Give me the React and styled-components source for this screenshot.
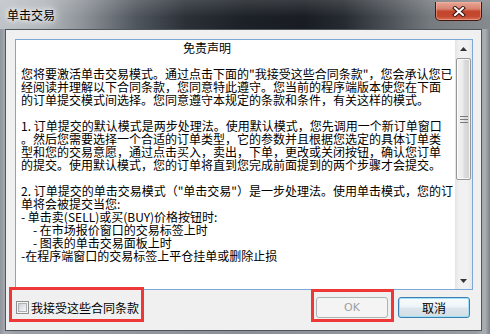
import React from 'react';
import styled, { createGlobalStyle } from 'styled-components';

const Global = createGlobalStyle`
  html, body { margin: 0; padding: 0; background: #fff; }
  body {
    width: 490px; height: 334px; overflow: hidden;
    font-family: "Noto Sans CJK SC", "Noto Sans", sans-serif;
  }
`;

const Window = styled.div`
  width: 490px;
  height: 334px;
  box-sizing: border-box;
  display: flex;
  flex-direction: column;
  background: linear-gradient(90deg, #8f959b 0%, #a3a9ae 1%, #9aa0a6 3%, #8a9096 50%, #979ca1 97%, #a9aeb3 99%, #7d8288 100%);
`;

const TitleBar = styled.div`
  height: 29px;
  flex: none;
  display: flex;
  align-items: flex-start;
  justify-content: space-between;
  background:
    linear-gradient(180deg, rgba(255,255,255,0.14) 0%, rgba(255,255,255,0) 60%),
    linear-gradient(90deg, #bfc4c9 0%, #b1b6bb 9%, #8d9298 17%, #4f555c 28%, #2b3037 38%, #1c2127 50%, #191d23 62%, #252a30 70%, #4f545a 80%, #767b80 88%, #858a8f 100%);
`;

const Caption = styled.div`
  padding: 8px 0 0 7px;
  font-size: 12px;
  line-height: 14px;
  color: #000;
  text-shadow: 0 0 4px #fff, 0 0 8px rgba(255,255,255,0.9), 0 0 12px rgba(255,255,255,0.7);
`;

const CloseButton = styled.div`
  margin: 2px 8px 0 0;
  width: 47px;
  height: 19px;
  box-sizing: border-box;
  border: 1px solid #43160f;
  border-top: none;
  border-radius: 0 0 5px 5px;
  background: linear-gradient(180deg, #e7a696 0%, #d98470 38%, #c2452c 52%, #c3492f 80%, #d8725a 100%);
  box-shadow: inset 0 0 0 1px rgba(255, 190, 170, 0.45);
  display: flex;
  align-items: center;
  justify-content: center;
`;

const Client = styled.div`
  flex: 1;
  margin: 0 8px 3px 5px;
  border: 1px solid #4f565d;
  background: #f0f0f0;
  display: flex;
  flex-direction: column;
`;

const TextBox = styled.div`
  margin: 9px 8px 0 9px;
  height: 251px;
  flex: none;
  box-sizing: border-box;
  border: 1px solid #7ba8d6;
  background: #fff;
  display: flex;
`;

const Content = styled.div`
  flex: 1;
  padding: 1px 0 0 5px;
  overflow: hidden;
  font-size: 12px;
  line-height: 13px;
  color: #000;
`;

const Line = styled.div`
  height: 13px;
  white-space: pre;
  padding-left: ${p => p.$indent || 0}px;
`;

const Title = styled(Line)`
  padding-left: 162px;
`;

const Scrollbar = styled.div`
  width: 17px;
  flex: none;
  display: flex;
  flex-direction: column;
  background: linear-gradient(90deg, #e4e4e4 0%, #f1f1f1 25%, #f1f1f1 75%, #e7e7e7 100%);
`;

const ArrowButton = styled.div`
  height: 17px;
  flex: none;
  display: flex;
  align-items: center;
  justify-content: center;
`;

const Thumb = styled.div`
  margin: 1px 1px 0 1px;
  height: 122px;
  flex: none;
  box-sizing: border-box;
  border: 1px solid #979797;
  border-radius: 2px;
  background: linear-gradient(90deg, #f4f4f4 0%, #ebebeb 45%, #dcdcdc 55%, #d2d2d2 100%);
  box-shadow: inset 0 0 0 1px rgba(255,255,255,0.75);
  display: flex;
  align-items: center;
  justify-content: center;
`;

const TrackSpace = styled.div`
  flex: 1;
`;

const Footer = styled.div`
  height: 40px;
  flex: none;
  display: flex;
  align-items: flex-start;
  padding: 0 11px 0 6px;
`;

const CheckRow = styled.label`
  width: 129px;
  height: 29px;
  box-sizing: border-box;
  padding: 11px 0 0 4px;
  display: flex;
  align-items: flex-start;
  gap: 2px;
  outline: 3px solid #ee3737;
  font-size: 12px;
  line-height: 13px;
  color: #000;
`;

const CheckBox = styled.span`
  width: 13px;
  height: 13px;
  flex: none;
  box-sizing: border-box;
  border: 1px solid #8e8f8f;
  background: #f4f4f4;
  display: flex;
  align-items: center;
  justify-content: center;
  &::before {
    content: "";
    width: 9px;
    height: 9px;
    box-sizing: border-box;
    border: 1px solid #aeb1b5;
    background: linear-gradient(135deg, #cbcfd5 0%, #e3e5e8 50%, #f7f7f7 100%);
  }
`;

const OKSlot = styled.div`
  margin: 2px 0 0 auto;
  width: 77px;
  height: 27px;
  box-sizing: border-box;
  padding: 5px 0 0 2px;
  outline: 3px solid #ee3737;
`;

const Button = styled.div`
  width: 72px;
  height: 21px;
  box-sizing: border-box;
  border-radius: 3px;
  display: flex;
  align-items: center;
  justify-content: center;
  font-size: 12px;
`;

const OKButton = styled(Button)`
  border: 1px solid #adb2b5;
  background: #f4f4f4;
  color: #a0a0a0;
  font-family: "DejaVu Sans", sans-serif;
  font-size: 11px;
`;

const CancelButton = styled(Button)`
  margin: 7px 0 0 7px;
  border: 1px solid #3c7fb1;
  background: linear-gradient(180deg, #f7fbfd 0%, #eef4f8 48%, #dde6ec 52%, #d2dde4 100%);
  box-shadow: inset 0 0 0 1px #9fe0f9;
  color: #000;
`;

const lines = [
  { t: '' },
  { t: '您将要激活单击交易模式。通过点击下面的"我接受这些合同条款"，您会承认您已' },
  { t: '经阅读并理解以下合同条款，您同意特此遵守。您当前的程序端版本使您在下面' },
  { t: '的订单提交模式间选择。您同意遵守本规定的条款和条件，有关这样的模式。' },
  { t: '' },
  { t: '1. 订单提交的默认模式是两步处理法。使用默认模式，您先调用一个新订单窗口' },
  { t: '。然后您需要选择一个合适的订单类型，它的参数并且根据您选定的具体订单类' },
  { t: '型和您的交易意愿，通过点击买入，卖出，下单，更改或关闭按钮，确认您订单' },
  { t: '的提交。使用默认模式，您的订单将直到您完成前面提到的两个步骤才会提交。' },
  { t: '' },
  { t: '2. 订单提交的单击交易模式（"单击交易"）是一步处理法。使用单击模式，您的订' },
  { t: '单将会被提交当您:' },
  { t: '- 单击卖(SELL)或买(BUY)价格按钮时:' },
  { t: '- 在市场报价窗口的交易标签上时', indent: 12 },
  { t: '- 图表的单击交易面板上时', indent: 12 },
  { t: '-在程序端窗口的交易标签上平仓挂单或删除止损' },
];

const CloseGlyph = () => (
  <svg width="14" height="11" viewBox="0 0 14 11">
    <path d="M3 2 L11 9 M11 2 L3 9" stroke="#3a1410" strokeWidth="4" strokeLinecap="square" fill="none" />
    <path d="M3 2 L11 9 M11 2 L3 9" stroke="#ffffff" strokeWidth="2" strokeLinecap="square" fill="none" />
  </svg>
);

const UpArrow = () => (
  <svg width="7" height="4" viewBox="0 0 7 4">
    <path d="M0 4 L3.5 0 L7 4 Z" fill="#333" />
  </svg>
);

const DownArrow = () => (
  <svg width="7" height="4" viewBox="0 0 7 4">
    <path d="M0 0 L7 0 L3.5 4 Z" fill="#333" />
  </svg>
);

const Grip = () => (
  <svg width="8" height="7" viewBox="0 0 8 7">
    <path d="M0 0.5 H8 M0 3.5 H8 M0 6.5 H8" stroke="#7a7a7a" strokeWidth="1" />
  </svg>
);

export default function App() {
  return (
    <>
      <Global />
      <Window>
        <TitleBar>
          <Caption>单击交易</Caption>
          <CloseButton><CloseGlyph /></CloseButton>
        </TitleBar>
        <Client>
          <TextBox>
            <Content>
              <Title>免责声明</Title>
              {lines.map((l, i) => (
                <Line key={i} $indent={l.indent}>{l.t || ' '}</Line>
              ))}
            </Content>
            <Scrollbar>
              <ArrowButton><UpArrow /></ArrowButton>
              <Thumb><Grip /></Thumb>
              <TrackSpace />
              <ArrowButton><DownArrow /></ArrowButton>
            </Scrollbar>
          </TextBox>
          <Footer>
            <CheckRow>
              <CheckBox />
              <span>我接受这些合同条款</span>
            </CheckRow>
            <OKSlot>
              <OKButton>OK</OKButton>
            </OKSlot>
            <CancelButton>取消</CancelButton>
          </Footer>
        </Client>
      </Window>
    </>
  );
}
